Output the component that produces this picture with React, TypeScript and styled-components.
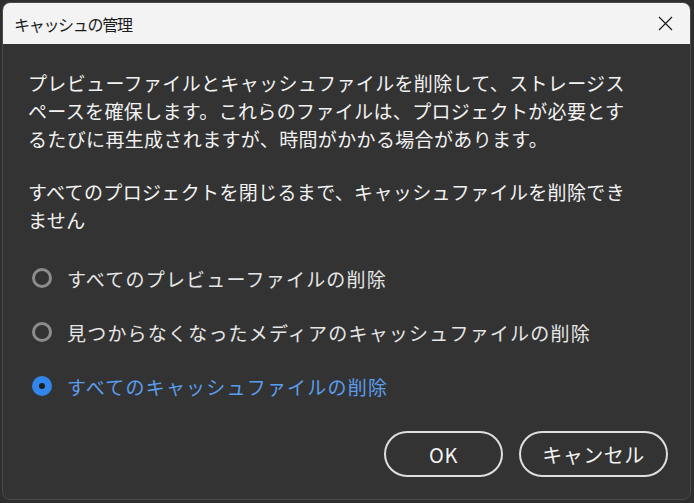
import React, { useState } from 'react';
import styled, { createGlobalStyle } from 'styled-components';

const FONT = `"Noto Sans CJK JP", "Noto Sans", "Liberation Sans", sans-serif`;
const BLUE = '#3285ea';

const GlobalStyle = createGlobalStyle`
  html, body {
    margin: 0;
    padding: 0;
    background: #2e2e2e;
  }
  body {
    font-family: ${FONT};
  }
`;

const Page = styled.div`
  width: 694px;
  height: 503px;
  padding: 2px 3px 3px 2px;
  box-sizing: border-box;
  display: flex;
`;

const Window = styled.div`
  flex: 1;
  display: flex;
  flex-direction: column;
  border: 1px solid #4a4a4a;
  border-radius: 8px;
  overflow: hidden;
  background: #333333;
`;

const TitleBar = styled.div`
  height: 41px;
  flex-shrink: 0;
  display: flex;
  align-items: center;
  justify-content: space-between;
  padding: 0 12px 0 11px;
  background: #f3f3f3;
`;

const Title = styled.span`
  font-size: 16px;
  letter-spacing: -1.3px;
  color: #1b1b1b;
`;

const CloseButton = styled.button`
  width: 26px;
  height: 26px;
  padding: 0;
  border: none;
  background: transparent;
  display: flex;
  align-items: center;
  justify-content: center;
`;

const Body = styled.div`
  flex: 1;
  display: flex;
  flex-direction: column;
  padding: 25px 22px 22px 25px;
`;

const Paragraph = styled.p`
  margin: 0 0 25px;
  font-size: 19px;
  letter-spacing: 0.35px;
  line-height: 28px;
  color: #f2f2f2;
  white-space: nowrap;
`;

const Options = styled.div`
  display: flex;
  flex-direction: column;
  gap: 26px;
  margin-top: 5px;
`;

const Option = styled.label<{ $checked: boolean }>`
  display: flex;
  align-items: center;
  gap: 15px;
  padding-left: 4px;
  height: 28px;
  font-size: 19px;
  letter-spacing: 1.2px;
  color: ${({ $checked }) => ($checked ? '#5b9ded' : '#e6e6e6')};
  cursor: pointer;
`;

const Radio = styled.span<{ $checked: boolean }>`
  width: 20px;
  height: 20px;
  box-sizing: border-box;
  border-radius: 50%;
  flex-shrink: 0;
  display: flex;
  align-items: center;
  justify-content: center;
  border: ${({ $checked }) => ($checked ? `none` : `3px solid #8c8c8c`)};
  background: ${({ $checked }) => ($checked ? BLUE : 'transparent')};

  &::after {
    content: '';
    width: 6px;
    height: 6px;
    border-radius: 50%;
    background: #1d1d1d;
    display: ${({ $checked }) => ($checked ? 'block' : 'none')};
  }
`;

const Footer = styled.div`
  margin-top: auto;
  display: flex;
  justify-content: flex-end;
  gap: 16px;
`;

const PillButton = styled.button<{ $width: number }>`
  width: ${({ $width }) => $width}px;
  height: 46px;
  border: 2px solid #dedede;
  border-radius: 23px;
  background: transparent;
  color: #f2f2f2;
  font-family: ${FONT};
  font-size: 20px;
  letter-spacing: 0.5px;
  cursor: pointer;
`;

const options = [
  'すべてのプレビューファイルの削除',
  '見つからなくなったメディアのキャッシュファイルの削除',
  'すべてのキャッシュファイルの削除',
];

export default function App() {
  const [selected, setSelected] = useState(2);

  return (
    <>
      <GlobalStyle />
      <Page>
        <Window>
          <TitleBar>
            <Title>キャッシュの管理</Title>
            <CloseButton aria-label="閉じる">
              <svg width="15" height="15" viewBox="0 0 15 15">
                <path d="M1 1 L14 14 M14 1 L1 14" stroke="#1b1b1b" strokeWidth="1.2" fill="none" />
              </svg>
            </CloseButton>
          </TitleBar>
          <Body>
            <Paragraph>
              プレビューファイルとキャッシュファイルを削除して、ストレージス
              <br />
              ペースを確保します。これらのファイルは、プロジェクトが必要とす
              <br />
              るたびに再生成されますが、時間がかかる場合があります。
            </Paragraph>
            <Paragraph>
              すべてのプロジェクトを閉じるまで、キャッシュファイルを削除でき
              <br />
              ません
            </Paragraph>
            <Options>
              {options.map((label, i) => (
                <Option key={label} $checked={selected === i} onClick={() => setSelected(i)}>
                  <Radio $checked={selected === i} />
                  {label}
                </Option>
              ))}
            </Options>
            <Footer>
              <PillButton $width={119}>OK</PillButton>
              <PillButton $width={149}>キャンセル</PillButton>
            </Footer>
          </Body>
        </Window>
      </Page>
    </>
  );
}
